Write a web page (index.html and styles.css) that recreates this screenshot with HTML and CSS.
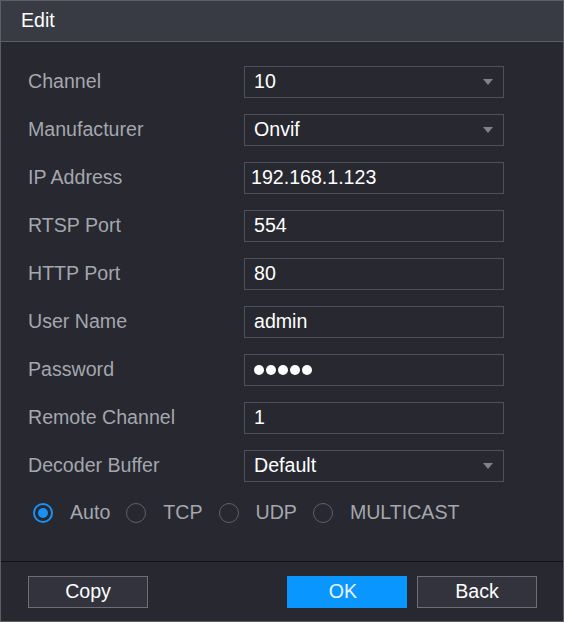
FILE: index.html
```html
<!DOCTYPE html>
<html>
<head>
<meta charset="utf-8">
<link rel="stylesheet" href="styles.css">
</head>
<body>
<div class="window">
  <div class="header">Edit</div>
  <div class="form">
    <div class="row"><div class="label">Channel</div><div class="field select"><span class="val">10</span><span class="arrow"></span></div></div>
    <div class="row"><div class="label">Manufacturer</div><div class="field select"><span class="val">Onvif</span><span class="arrow"></span></div></div>
    <div class="row"><div class="label">IP Address</div><div class="field ip"><span class="val">192.168.1.123</span></div></div>
    <div class="row"><div class="label">RTSP Port</div><div class="field"><span class="val">554</span></div></div>
    <div class="row"><div class="label">HTTP Port</div><div class="field"><span class="val">80</span></div></div>
    <div class="row"><div class="label">User Name</div><div class="field"><span class="val">admin</span></div></div>
    <div class="row"><div class="label">Password</div><div class="field"><span class="dots"><i></i><i></i><i></i><i></i><i></i></span></div></div>
    <div class="row"><div class="label">Remote Channel</div><div class="field"><span class="val">1</span></div></div>
    <div class="row"><div class="label">Decoder Buffer</div><div class="field select"><span class="val">Default</span><span class="arrow"></span></div></div>
    <div class="radios">
      <div class="radio on"><span class="circle"></span><span class="rtext">Auto</span></div>
      <div class="radio"><span class="circle"></span><span class="rtext">TCP</span></div>
      <div class="radio"><span class="circle"></span><span class="rtext">UDP</span></div>
      <div class="radio"><span class="circle"></span><span class="rtext">MULTICAST</span></div>
    </div>
  </div>
  <div class="footer">
    <div class="btn">Copy</div>
    <div class="spacer"></div>
    <div class="btn primary">OK</div>
    <div class="btn">Back</div>
  </div>
</div>
</body>
</html>
```
FILE: styles.css
```css
html, body {
  margin: 0;
  padding: 0;
  background: #ffffff;
}
body {
  width: 565px;
  height: 623px;
  font-family: "Liberation Sans", Arial, sans-serif;
}
.window {
  width: 564px;
  height: 622px;
  box-sizing: border-box;
  border: 1px solid #5b5e66;
  background: #272830;
  display: flex;
  flex-direction: column;
}
.header {
  height: 40px;
  flex: none;
  background: #383a44;
  border-bottom: 1px solid #5b5e66;
  color: #ffffff;
  font-size: 19.6px;
  line-height: 39px;
  padding-left: 20px;
}
.form {
  flex: 1;
  padding: 24px 0 0 27px;
  display: flex;
  flex-direction: column;
  gap: 16px;
  border-bottom: 1px solid #111216;
}
.row {
  display: flex;
  align-items: center;
  height: 32px;
}
.label {
  width: 216px;
  color: #a4a7ad;
  font-size: 19.6px;
  line-height: 22px;
  padding-bottom: 2px;
}
.field {
  width: 260px;
  height: 32px;
  box-sizing: border-box;
  border: 1px solid #4d5058;
  display: flex;
  align-items: center;
  padding-left: 9px;
  padding-bottom: 1px;
  color: #ffffff;
  font-size: 19.6px;
  position: relative;
}
.field.ip {
  padding-left: 6px;
}
.arrow {
  position: absolute;
  right: 10px;
  top: 12px;
  width: 0;
  height: 0;
  border-left: 5px solid transparent;
  border-right: 5px solid transparent;
  border-top: 6px solid #80838a;
}
.dots {
  display: flex;
  gap: 2px;
  padding-top: 1px;
}
.dots i {
  display: block;
  width: 10px;
  height: 10px;
  border-radius: 50%;
  background: #ffffff;
}
.radios {
  display: flex;
  align-items: center;
  height: 30px;
  padding-left: 5px;
}
.radio {
  display: flex;
  align-items: center;
  color: #a4a7ad;
  font-size: 19.6px;
  margin-right: 16px;
}
.rtext {
  padding-bottom: 2px;
}
.circle {
  width: 20px;
  height: 20px;
  box-sizing: border-box;
  border-radius: 50%;
  border: 1px solid #5f626a;
  margin-right: 17px;
  position: relative;
}
.radio.on .circle {
  border: 2px solid #1a91f5;
}
.radio.on .circle::after {
  content: "";
  position: absolute;
  left: 3px;
  top: 3px;
  width: 10px;
  height: 10px;
  border-radius: 50%;
  background: #1a91f5;
}
.footer {
  height: 59px;
  flex: none;
  box-sizing: border-box;
  padding: 14px 26px 0 27px;
  display: flex;
  gap: 10px;
}
.spacer {
  flex: 1;
}
.btn {
  width: 120px;
  height: 32px;
  box-sizing: border-box;
  border: 1px solid #6c6f76;
  background: #32333c;
  color: #ffffff;
  font-size: 19.6px;
  display: flex;
  align-items: center;
  justify-content: center;
  padding-bottom: 1px;
}
.btn.primary {
  background: #0a96ff;
  border-color: #0a96ff;
  color: #e8f4ff;
  padding-right: 8px;
}
```
